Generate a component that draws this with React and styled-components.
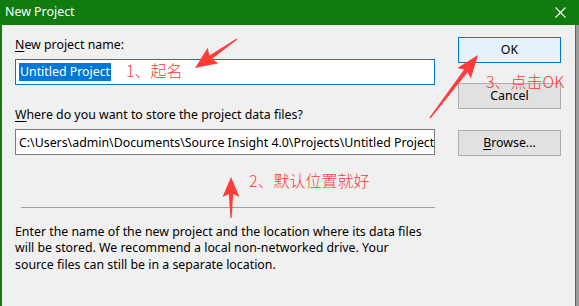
import React from "react";
import styled, { createGlobalStyle } from "styled-components";

const Global = createGlobalStyle`
  html, body { margin: 0; padding: 0; }
  body {
    width: 579px;
    height: 306px;
    overflow: hidden;
    background: #9b9b9b;
    font-family: "Noto Sans", "Noto Sans CJK SC", sans-serif;
  }
`;

const Window = styled.div`
  position: relative;
  width: 579px;
  height: 306px;
  display: flex;
  flex-direction: column;
  font-size: 12.35px;
  color: #000;
`;

const TitleBar = styled.div`
  height: 25px;
  flex: 0 0 25px;
  background: #107c10;
  color: #fff;
  display: flex;
  align-items: center;
  justify-content: space-between;
  padding: 0 13px 0 5px;
  font-size: 12.4px;
`;

const Title = styled.span`
  line-height: 16px;
  padding-bottom: 1px;
`;

const Close = styled.svg`
  width: 11px;
  height: 11px;
  display: block;
`;

const Body = styled.div`
  flex: 1;
  margin-right: 3px;
  background: #f0f0f0;
  border-left: 2px solid #107c10;
  border-right: 1px solid #2a8a2a;
  display: flex;
  gap: 23px;
  padding: 12px 0 0 13px;
`;

const LeftCol = styled.div`
  width: 420px;
  display: flex;
  flex-direction: column;
`;

const RightCol = styled.div`
  width: 103px;
  display: flex;
  flex-direction: column;
`;

const Label = styled.div`
  line-height: 16px;
  margin-top: ${(p) => p.$mt || 0}px;
  white-space: nowrap;
`;

const U = styled.span`
  text-decoration: underline;
  text-underline-offset: 2px;
`;

const Field = styled.div`
  box-sizing: border-box;
  height: 26px;
  margin-top: 6px;
  background: #fff;
  border: 1px solid ${(p) => (p.$focus ? "#0078d7" : "#7a7a7a")};
  display: flex;
  align-items: center;
  padding: 0 3px;
  overflow: hidden;
  white-space: nowrap;
`;

const Selected = styled.span`
  background: #0078d7;
  color: #fff;
  line-height: 18px;
  padding: 0 1px;
`;

const Separator = styled.div`
  margin: 52px 0 0 6px;
  height: 1px;
  background: #a0a0a0;
`;

const Paragraph = styled.p`
  margin: 16px 0 0;
  line-height: 16.4px;
  width: 430px;
  white-space: nowrap;
`;

const Button = styled.div`
  box-sizing: border-box;
  height: 26px;
  margin-top: ${(p) => p.$mt || 0}px;
  background: ${(p) => (p.$default ? "#e5f1fb" : "#e1e1e1")};
  border: 1px solid ${(p) => (p.$default ? "#0078d7" : "#adadad")};
  display: flex;
  align-items: center;
  justify-content: center;
  line-height: 16px;
`;

const Note = styled.div`
  position: absolute;
  left: ${(p) => p.$x}px;
  top: ${(p) => p.$y}px;
  color: #ff3636;
  font-family: "Noto Sans CJK SC", sans-serif;
  font-weight: 300;
  font-size: 16px;
  line-height: 18px;
  white-space: nowrap;
`;

const Overlay = styled.svg`
  position: absolute;
  left: 0;
  top: 0;
  width: 579px;
  height: 306px;
  pointer-events: none;
`;

function arrowPoints([x1, y1], [x2, y2], headLen, headHalf, tailHalf, shaftHalf) {
  const dx = x2 - x1;
  const dy = y2 - y1;
  const len = Math.hypot(dx, dy);
  const ux = dx / len;
  const uy = dy / len;
  const nx = -uy;
  const ny = ux;
  const bx = x2 - ux * headLen;
  const by = y2 - uy * headLen;
  const wx = x2 - ux * (headLen + 3);
  const wy = y2 - uy * (headLen + 3);
  const pts = [
    [x1 + nx * tailHalf, y1 + ny * tailHalf],
    [bx + nx * shaftHalf, by + ny * shaftHalf],
    [wx + nx * headHalf, wy + ny * headHalf],
    [x2, y2],
    [wx - nx * headHalf, wy - ny * headHalf],
    [bx - nx * shaftHalf, by - ny * shaftHalf],
    [x1 - nx * tailHalf, y1 - ny * tailHalf],
  ];
  return pts.map((p) => p.map((v) => v.toFixed(1)).join(",")).join(" ");
}

const arrows = [
  { tail: [237, 39], tip: [195, 68], head: 19, half: 9.5 },
  { tail: [231, 218], tip: [231, 177], head: 17, half: 8.5 },
  { tail: [430, 118], tip: [478, 55], head: 20, half: 8.5 },
];

export default function App() {
  return (
    <>
      <Global />
      <Window>
        <TitleBar>
          <Title>New Project</Title>
          <Close viewBox="0 0 11 11">
            <path d="M0.5 0.5 L10.5 10.5 M10.5 0.5 L0.5 10.5" stroke="#fff" strokeWidth="1.1" />
          </Close>
        </TitleBar>
        <Body>
          <LeftCol>
            <Label>
              <U>N</U>ew project name:
            </Label>
            <Field $focus>
              <Selected>Untitled Project</Selected>
            </Field>
            <Label $mt={22}>
              <U>W</U>here do you want to store the project data files?
            </Label>
            <Field>C:\Users\admin\Documents\Source Insight 4.0\Projects\Untitled Project</Field>
            <Separator />
            <Paragraph>
              Enter the name of the new project and the location where its data files
              <br />
              will be stored. We recommend a local non-networked drive. Your
              <br />
              source files can still be in a separate location.
            </Paragraph>
          </LeftCol>
          <RightCol>
            <Button $default>OK</Button>
            <Button $mt={20}>Cancel</Button>
            <Button $mt={21}>
              <span>
                <U>B</U>rowse...
              </span>
            </Button>
          </RightCol>
        </Body>
        <Note $x={126} $y={61}>1、起名</Note>
        <Note $x={486} $y={72}>3、点击OK</Note>
        <Note $x={249} $y={171}>2、默认位置就好</Note>
        <Overlay viewBox="0 0 579 306">
          {arrows.map((a, i) => (
            <polygon key={i} points={arrowPoints(a.tail, a.tip, a.head, a.half, 0.6, 2.2)} fill="#ff3b3b" />
          ))}
        </Overlay>
      </Window>
    </>
  );
}
